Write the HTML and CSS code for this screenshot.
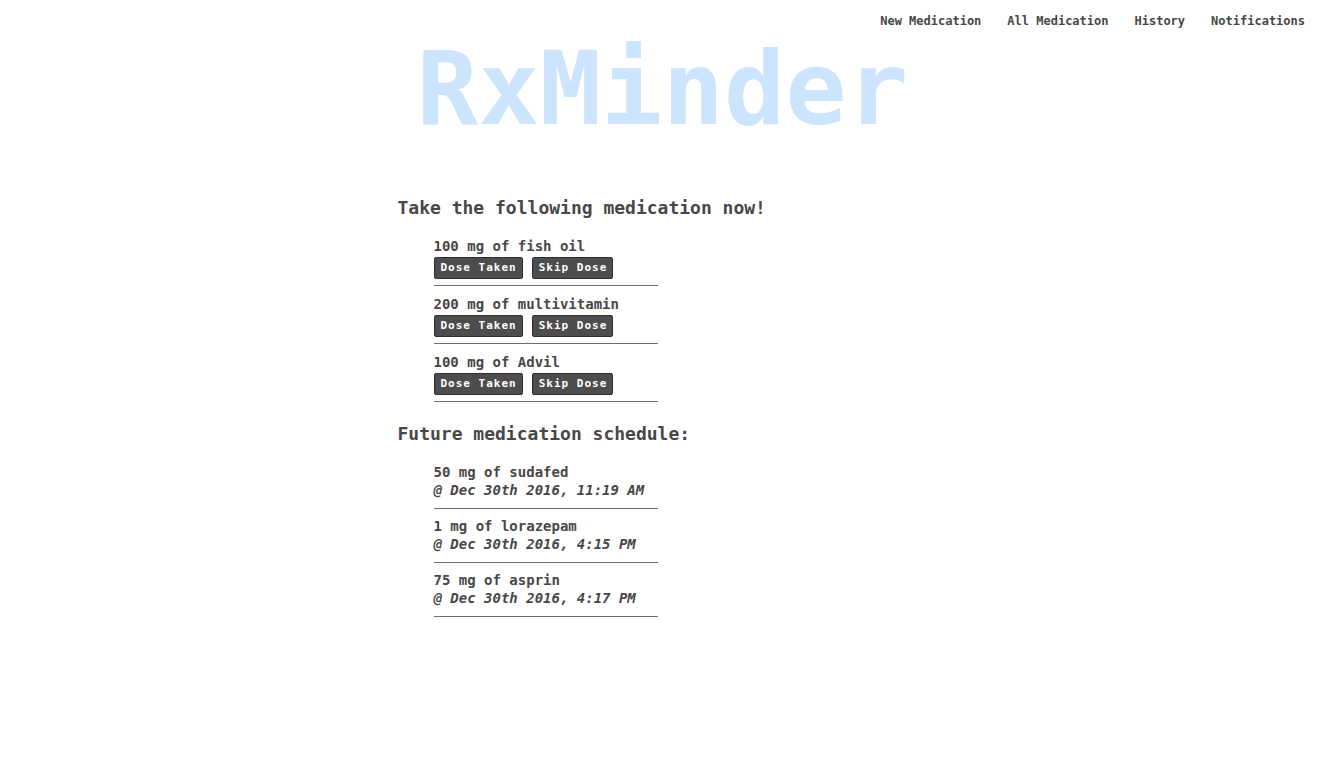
FILE: index.html
```html
<!DOCTYPE html>
<html>
<head>
<meta charset="utf-8">
<title>RxMinder</title>
<link rel="stylesheet" href="styles.css">
</head>
<body>
<nav class="nav">
  <a class="nav-link" href="#">New Medication</a>
  <a class="nav-link" href="#">All Medication</a>
  <a class="nav-link" href="#">History</a>
  <a class="nav-link" href="#">Notifications</a>
</nav>
<h1 class="title">RxMinder</h1>
<main class="content">
  <h2 class="section-title">Take the following medication now!</h2>
  <ul class="med-list">
    <li class="med-item">
      <div class="med-name">100 mg of fish oil</div>
      <div class="actions"><button class="btn">Dose Taken</button><button class="btn">Skip Dose</button></div>
    </li>
    <li class="med-item">
      <div class="med-name">200 mg of multivitamin</div>
      <div class="actions"><button class="btn">Dose Taken</button><button class="btn">Skip Dose</button></div>
    </li>
    <li class="med-item">
      <div class="med-name">100 mg of Advil</div>
      <div class="actions"><button class="btn">Dose Taken</button><button class="btn">Skip Dose</button></div>
    </li>
  </ul>
  <h2 class="section-title future">Future medication schedule:</h2>
  <ul class="med-list future-list">
    <li class="med-item future-item">
      <div class="med-name">50 mg of sudafed</div>
      <div class="med-time">@ Dec 30th 2016, 11:19 AM</div>
    </li>
    <li class="med-item future-item">
      <div class="med-name">1 mg of lorazepam</div>
      <div class="med-time">@ Dec 30th 2016, 4:15 PM</div>
    </li>
    <li class="med-item future-item">
      <div class="med-name">75 mg of asprin</div>
      <div class="med-time">@ Dec 30th 2016, 4:17 PM</div>
    </li>
  </ul>
</main>
</body>
</html>
```
FILE: styles.css
```css
html, body {
  margin: 0;
  padding: 0;
  background: #ffffff;
}
body {
  font-family: "DejaVu Sans Mono", "Liberation Mono", monospace;
  color: #474747;
}
.nav {
  display: flex;
  justify-content: flex-end;
  gap: 26px;
  padding: 14px 28px 0 0;
  font-size: 12px;
  line-height: 14px;
  font-weight: bold;
}
.nav-link {
  color: #474747;
  text-decoration: none;
}
.title {
  margin: 11px 0 0 0;
  padding-right: 8px;
  text-align: center;
  font-size: 102px;
  line-height: 100px;
  font-weight: bold;
  color: #cce4fd;
  letter-spacing: 0;
}
.content {
  width: 540px;
  margin: 0 auto;
  padding-left: 2px;
}
.section-title {
  margin: 58px 0 0 0;
  font-size: 18px;
  line-height: 22px;
  font-weight: bold;
}
.section-title.future {
  margin-top: 21px;
}
.med-list {
  list-style: none;
  margin: 17px 0 0 0;
  padding: 0 0 0 36px;
}
.med-list.future-list {
  margin-top: 18px;
}
.med-item {
  width: 224px;
  border-bottom: 1px solid #6e6e6e;
  padding: 2px 0 6px 0;
  margin-bottom: 8px;
}
.med-name {
  font-size: 14px;
  line-height: 17px;
  font-weight: bold;
}
.actions {
  display: flex;
  gap: 9px;
  margin-top: 2px;
}
.btn {
  font-family: "DejaVu Sans Mono", "Liberation Mono", monospace;
  font-size: 11px;
  font-weight: bold;
  letter-spacing: 1px;
  color: #ffffff;
  background: #4d4d4d;
  border: 1px solid #2f2f2f;
  border-radius: 2px;
  height: 22px;
  padding: 0 5px 0 6px;
  line-height: 20px;
  cursor: pointer;
}
.future-item {
  padding: 0 0 8px 0;
  margin-bottom: 8px;
}
.future-item .med-name {
  line-height: 18px;
}
.med-time {
  font-size: 14px;
  line-height: 19px;
  font-weight: bold;
  font-style: italic;
}
```
